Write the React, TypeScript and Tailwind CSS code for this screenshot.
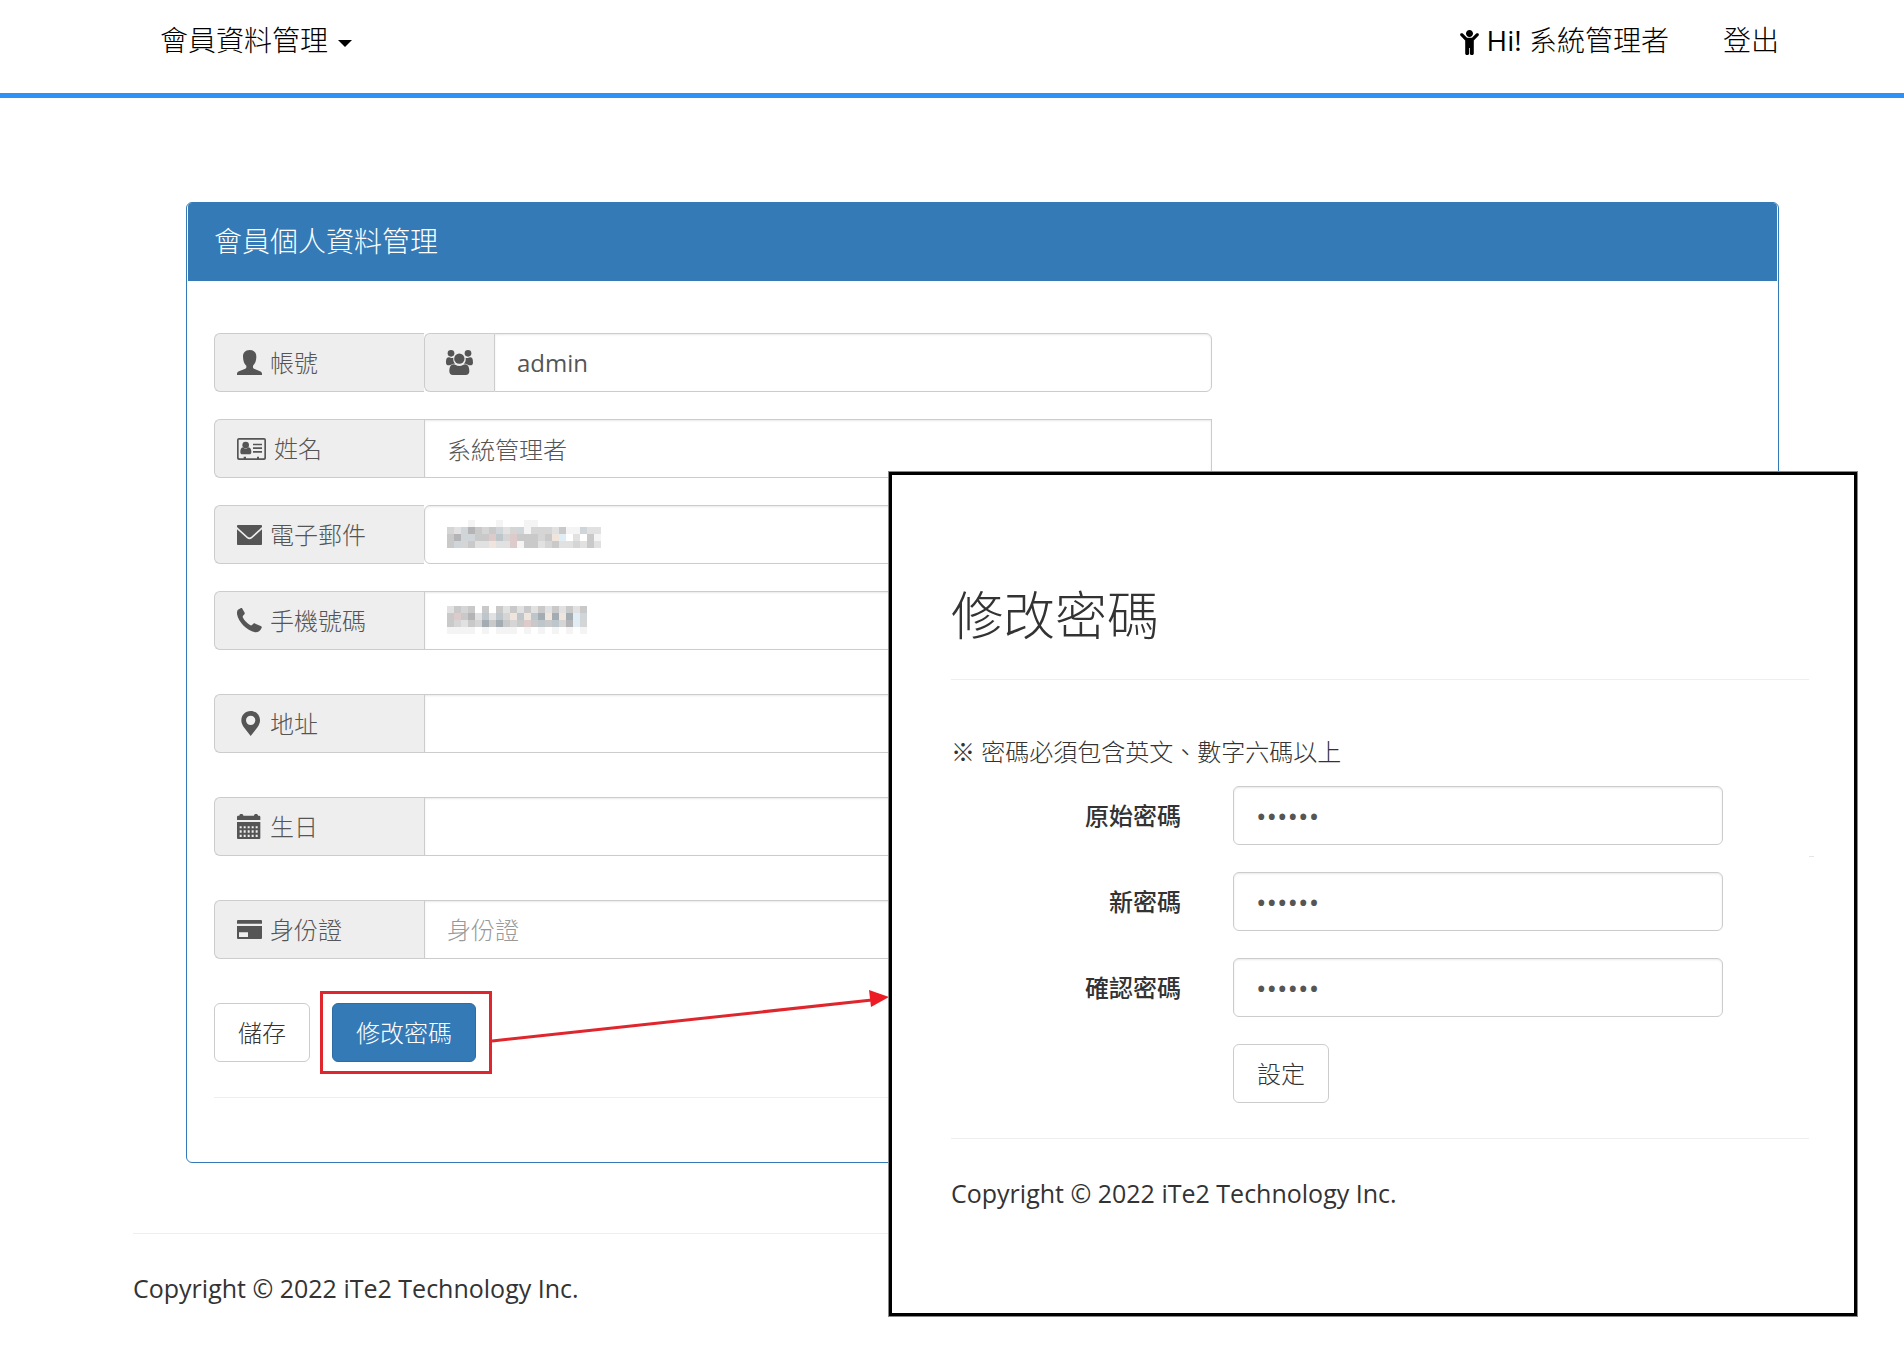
import type { ReactNode } from 'react';
import { FaChild } from 'react-icons/fa';
import { clsx } from 'clsx';

const iconProps = { fill: 'currentColor', 'aria-hidden': true, className: 'shrink-0' } as const;

const UserIcon = () => (
  <svg {...iconProps} width="25" height="25" viewBox="0 0 75 75">
    <path d="M38 0c14 0 20 9 20 20 0 12-4 22-10 27v5c0 3 2 4 5 5l16 7c5 2 6 4 6 9v2H0v-2c0-5 1-7 6-9l17-7c3-1 5-2 5-5v-5C22 42 18 32 18 20 18 9 24 0 38 0z" />
  </svg>
);

const UsersIcon = () => (
  <svg {...iconProps} width="27" height="25" viewBox="0 0 81 75">
    <circle cx="15" cy="10" r="10" />
    <circle cx="66" cy="10" r="10" />
    <circle cx="40" cy="26" r="15.5" />
    <path d="M8 22c2 0 4 2 8 2 3 0 5-1 6-1-1 8 1 13 5 18-7 0-11 2-15 5H8c-5 0-8-3-8-8 0-7 1-16 8-16z" />
    <path d="M73 22c-2 0-4 2-8 2-3 0-5-1-6-1 1 8-1 13-5 18 7 0 11 2 15 5h4c5 0 8-3 8-8 0-7-1-16-8-16z" />
    <path d="M23 43c3 0 8 5 17 5s14-5 17-5c9 0 13 9 13 21 0 7-4 11-11 11H21c-7 0-11-4-11-11 0-12 4-21 13-21z" />
  </svg>
);

const CardIcon = () => (
  <svg {...iconProps} width="29" height="22" viewBox="0 0 87 66">
    <path
      fillRule="evenodd"
      d="M6 0h75a6 6 0 0 1 6 6v54a6 6 0 0 1-6 6H6a6 6 0 0 1-6-6V6a6 6 0 0 1 6-6zM5 7v51c0 2 1 3 3 3h12v-5h7v5h33v-5h6v5h13c2 0 3-1 3-3V7c0-2-1-2-3-2H8C6 5 5 5 5 7z"
    />
    <circle cx="26" cy="21" r="10" />
    <path d="M18 28c4 5 12 5 16 0 7 1 9 7 9 14 0 4-2 7-6 7H16c-4 0-6-3-6-7 0-7 2-13 8-14z" />
    <path d="M48 17h27v5H48zM48 28h27v5H48zM48 39h27v5H48z" />
  </svg>
);

const EnvelopeIcon = () => (
  <svg {...iconProps} width="25" height="20" viewBox="0 0 75 60">
    <path d="M4 0h67c3 0 4 1 4 4v2L43 35c-4 3-7 3-11 0L0 6V4c0-3 1-4 4-4z" />
    <path d="M0 13l30 27c5 4 10 4 15 0l30-27v43c0 3-1 4-4 4H4c-3 0-4-1-4-4z" />
  </svg>
);

const PhoneIcon = () => (
  <svg {...iconProps} width="25" height="25" viewBox="0 0 75 75">
    <path d="M3 5l9-5c2-1 3 0 4 2l7 12c1 3 0 4-2 6l-3 3c-1 2-1 4 0 6 5 9 12 16 21 22 2 1 4 2 6 0l4-4c2-1 4-2 6 0l16 7c3 1 4 3 3 5-3 8-10 15-20 14C29 67 4 42 0 18 0 12 0 8 3 5z" />
  </svg>
);

const MarkerIcon = () => (
  <svg {...iconProps} width="25" height="25" viewBox="0 0 75 75">
    <path
      fillRule="evenodd"
      d="M41 0c16 0 28 12 28 28 0 8-3 14-7 20L41 75 20 48c-4-6-7-12-7-20C13 12 25 0 41 0zm0 14a14 14 0 1 0 0 28 14 14 0 0 0 0-28z"
    />
  </svg>
);

const CalendarIcon = () => (
  <svg {...iconProps} width="25" height="25" viewBox="0 0 75 75">
    <path d="M0 9c0-3 2-4 4-4h3c0-3 2-5 6-5s6 2 6 5h32c0-3 2-5 6-5s6 2 6 5h3c2 0 4 1 4 4v9H0z" />
    <path
      fillRule="evenodd"
      d="M0 24h70v48c0 2-1 3-3 3H3c-2 0-3-1-3-3zM8 37v6h6v-6zm12 0v6h6v-6zm12 0v6h6v-6zm12 0v6h6v-6zm12 0v6h6v-6zM8 49v7h6v-7zm12 0v7h6v-7zm12 0v7h6v-7zm12 0v7h6v-7zm12 0v7h6v-7zM8 62v7h6v-7zm12 0v7h6v-7zm12 0v7h6v-7zm12 0v7h6v-7zm12 0v7h6v-7z"
    />
  </svg>
);

const CreditCardIcon = () => (
  <svg {...iconProps} width="25" height="19" viewBox="0 0 75 57">
    <path d="M3 0h69c2 0 3 1 3 3v8H0V3c0-2 1-3 3-3z" />
    <path fillRule="evenodd" d="M0 18h75v36c0 2-1 3-3 3H3c-2 0-3-1-3-3zm6 19v14h27V37z" />
  </svg>
);

// Pixelated cover over the personal values, one palette letter per block
const palette: Record<string, string> = {
  a: '#f4f4f4',
  b: '#e1e1e1',
  c: '#d5d5d6',
  d: '#c9c9ca',
  e: '#b4b4b6',
  f: '#cfd5d8',
  g: '#dccbca',
  h: '#bcc6cb',
  i: '#f0e5dd',
  j: '#e1edf5',
  k: '#a3abb3',
};

const emailMask = [
  '   a   a   aa         ',
  'cbfedcdfbcfacccbdaafbb',
  'deffddghcgdddcdij b da',
  'dfcdbbibbgaddbcdbbcbdb',
];
const phoneMask = [
  'bdcd d dbdbdbdbdbdbd',
  'dgdebhbhcihihkikikjf',
  'dcbdckdkdcdgdhdhcejc',
  'aaaa a aaa a a a a a',
];

const Mosaic = ({ rows }: { rows: string[] }) => (
  <svg
    width={rows[0].length * 7}
    height={rows.length * 7}
    shapeRendering="crispEdges"
    className="pointer-events-none absolute left-[23px] top-[15px]"
    aria-hidden
  >
    {rows.map((row, y) =>
      row.split('').map((c, x) =>
        c === ' ' ? null : <rect key={`${x}-${y}`} x={x * 7} y={y * 7} width="7" height="7" fill={palette[c]} />
      )
    )}
  </svg>
);

const controlClass =
  'h-[59px] w-full min-w-0 border border-[#ccc] bg-white px-[22px] text-[#555] shadow-[inset_0_1px_2px_rgba(0,0,0,0.09)] outline-none placeholder:text-[#999]';
const buttonClass = 'h-[59px] rounded-md border px-[23px] text-2xl';

interface FieldProps {
  id: string;
  label: string;
  icon: ReactNode;
  value?: string;
  placeholder?: string;
  extraIcon?: ReactNode;
  mask?: string[];
  className?: string;
}

const Field = ({ id, label, icon, value, placeholder, extraIcon, mask, className }: FieldProps) => (
  <div className="flex h-[59px]">
    <label
      htmlFor={id}
      className="flex w-[210px] shrink-0 items-center gap-2 rounded-l-md border border-r-0 border-[#ccc] bg-[#eee] pl-[22px] text-2xl text-[#555]"
    >
      {icon}
      {label}
    </label>
    {extraIcon && (
      <span className="flex w-[70px] shrink-0 items-center justify-center rounded-l-md border border-r-0 border-[#ccc] bg-[#eee] text-[#555]">
        {extraIcon}
      </span>
    )}
    <div className="relative min-w-0 flex-1">
      <input
        id={id}
        type="text"
        defaultValue={value}
        placeholder={placeholder}
        className={clsx(controlClass, 'text-2xl', className)}
      />
      {mask && <Mosaic rows={mask} />}
    </div>
  </div>
);

const PasswordField = ({ id, label }: { id: string; label: string }) => (
  <div className="flex items-center">
    <label htmlFor={id} className="w-[282px] shrink-0 pr-[52px] text-right text-2xl font-medium">
      {label}
    </label>
    <input
      id={id}
      type="password"
      defaultValue="123456"
      className={clsx(controlClass, 'max-w-[490px] rounded-md text-[28px] font-normal')}
    />
  </div>
);

const Header = () => (
  <header className="border-b-[5px] border-[#2d91f8] text-[28px] text-black">
    <nav className="flex h-[93px] items-start justify-between pl-[160px] pr-[125px] pt-5">
      <button type="button" className="flex items-center gap-2.5 leading-10">
        會員資料管理
        <span className="mt-1.5 border-x-[7px] border-t-[7px] border-x-transparent border-t-black" />
      </button>
      <div className="flex items-center gap-[54px] leading-10">
        <a href="#profile" className="flex items-center gap-2">
          <FaChild className="mt-1 h-[25px] w-[19px]" />
          <span>
            <span className="font-normal">Hi!</span> 系統管理者
          </span>
        </a>
        <a href="#logout">登出</a>
      </div>
    </nav>
  </header>
);

const PasswordWindow = () => (
  <section className="absolute right-[47px] top-[472px] w-[968px] border-[3px] border-black bg-white pb-[100px] pl-[59px] pr-[45px] pt-[104px] ring-1 ring-[#888]">
    <h1 className="pb-7 text-[52px] leading-[72px]">修改密碼</h1>
    <hr className="border-[#eee]" />
    <p className="pb-4 pt-[54px] text-2xl leading-9">※ 密碼必須包含英文、數字六碼以上</p>
    <form className="flex flex-col gap-[27px]" onSubmit={(e) => e.preventDefault()}>
      <PasswordField id="old-password" label="原始密碼" />
      <PasswordField id="new-password" label="新密碼" />
      <PasswordField id="confirm-password" label="確認密碼" />
      <div className="pl-[282px]">
        <button type="submit" className={clsx(buttonClass, 'border-[#ccc] bg-white')}>
          設定
        </button>
      </div>
    </form>
    <hr className="mt-[35px] border-[#eee]" />
    <p className="pt-[34px] text-[25px] font-normal leading-10">Copyright © 2022 iTe2 Technology Inc.</p>
    <span className="absolute right-10 top-[381px] w-[5px] border-t border-[#e5e5e5]" aria-hidden />
  </section>
);

export default function App() {
  return (
    <div className="relative min-h-screen bg-white font-['Open_Sans','Noto_Sans_CJK_TC',sans-serif] font-light text-[#333]">
      <Header />

      <main className="pl-[186px] pr-[125px] pt-[104px]">
        <section className="rounded-md border border-[#337ab7] pb-16">
          <h2 className="mx-px rounded-t-sm bg-[#337ab7] px-[26px] pb-[19px] pt-[17px] text-[28px] leading-[42px] text-white">
            會員個人資料管理
          </h2>
          <form className="px-[27px] pt-[52px]" onSubmit={(e) => e.preventDefault()}>
            <div className="flex max-w-[998px] flex-col gap-11">
              <div className="flex flex-col gap-[27px]">
                <Field
                  id="account"
                  label="帳號"
                  icon={<UserIcon />}
                  extraIcon={<UsersIcon />}
                  value="admin"
                  className="rounded-r-md font-normal"
                />
                <Field id="name" label="姓名" icon={<CardIcon />} value="系統管理者" />
                <Field id="email" label="電子郵件" icon={<EnvelopeIcon />} mask={emailMask} className="rounded-md" />
                <Field id="phone" label="手機號碼" icon={<PhoneIcon />} mask={phoneMask} />
              </div>
              <Field id="address" label="地址" icon={<MarkerIcon />} />
              <Field id="birthday" label="生日" icon={<CalendarIcon />} />
              <Field id="id-card" label="身份證" icon={<CreditCardIcon />} placeholder="身份證" />
              <div className="flex gap-[22px]">
                <button type="submit" className={clsx(buttonClass, 'border-[#ccc] bg-white')}>
                  儲存
                </button>
                <div className="relative">
                  <button type="button" className={clsx(buttonClass, 'border-[#2e6da4] bg-[#337ab7] text-white')}>
                    修改密碼
                  </button>
                  {/* Highlight frame and arrow to the password window */}
                  <span className="pointer-events-none absolute -bottom-3 -left-3 -right-4 -top-3 border-[3px] border-[#df262d]" />
                  <svg width="400" height="60" className="pointer-events-none absolute left-full top-[-16px] ml-4" aria-hidden>
                    <path d="M0 54L380 13" stroke="#df262d" strokeWidth="3" />
                    <path d="M377 3l20 7-18 10z" fill="#ed1c24" />
                  </svg>
                </div>
              </div>
            </div>
            <hr className="mt-[35px] border-[#eee]" />
          </form>
        </section>
      </main>

      <footer className="ml-[133px] mr-[125px] mt-[70px] border-t border-[#eee] pt-[34px] text-[25px] font-normal leading-10">
        <p>Copyright © 2022 iTe2 Technology Inc.</p>
      </footer>

      <PasswordWindow />
    </div>
  );
}
